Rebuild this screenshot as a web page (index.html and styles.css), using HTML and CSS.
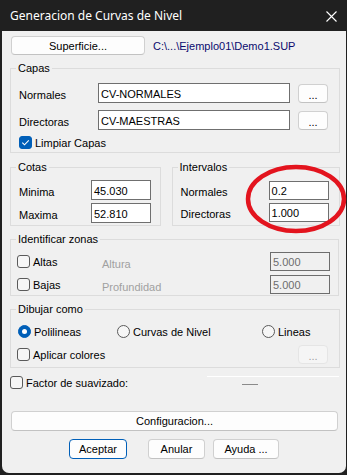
FILE: index.html
```html
<!DOCTYPE html>
<html lang="es">
<head>
<meta charset="utf-8">
<title>Generacion de Curvas de Nivel</title>
<link rel="stylesheet" href="styles.css">
</head>
<body>
<div class="window">
  <div class="titlebar">
    <span class="title">Generacion de Curvas de Nivel</span>
    <svg class="close" width="11" height="11" viewBox="0 0 11 11"><path d="M0.5 0.5 L10.5 10.5 M10.5 0.5 L0.5 10.5" stroke="#ffffff" stroke-width="1.1" fill="none"/></svg>
  </div>
  <div class="client">
    <div class="row-top">
      <button class="btn btn-sup">Superficie...</button>
      <span class="path">C:\...\Ejemplo01\Demo1.SUP</span>
    </div>

    <fieldset class="group capas">
      <legend>Capas</legend>
      <div class="field-row">
        <span class="lbl lbl-capas">Normales</span>
        <div class="input input-wide">CV-NORMALES</div>
        <button class="btn dots">...</button>
      </div>
      <div class="field-row row-gap">
        <span class="lbl lbl-capas">Directoras</span>
        <div class="input input-wide">CV-MAESTRAS</div>
        <button class="btn dots">...</button>
      </div>
      <div class="check-row limpiar">
        <span class="cb checked"><svg width="11" height="11" viewBox="0 0 11 11"><path d="M2.3 5.6 L4.5 7.8 L8.8 3.3" stroke="#ffffff" stroke-width="1.1" fill="none"/></svg></span>
        <span class="cb-text">Limpiar Capas</span>
      </div>
    </fieldset>

    <div class="pair">
      <fieldset class="group cotas">
        <legend>Cotas</legend>
        <div class="field-row">
          <span class="lbl lbl-cotas">Minima</span>
          <div class="input input-num">45.030</div>
        </div>
        <div class="field-row small-gap">
          <span class="lbl lbl-cotas">Maxima</span>
          <div class="input input-num">52.810</div>
        </div>
      </fieldset>
      <fieldset class="group intervalos">
        <legend>Intervalos</legend>
        <div class="field-row h19">
          <span class="lbl lbl-int">Normales</span>
          <div class="input input-num">0.2</div>
        </div>
        <div class="field-row h19 small-gap">
          <span class="lbl lbl-int">Directoras</span>
          <div class="input input-num">1.000</div>
        </div>
      </fieldset>
    </div>

    <fieldset class="group zonas">
      <legend>Identificar zonas</legend>
      <div class="field-row h19">
        <span class="check-item zona-check"><span class="cb"></span><span class="cb-text">Altas</span></span>
        <span class="lbl disabled-text grow">Altura</span>
        <div class="input input-num disabled">5.000</div>
      </div>
      <div class="field-row h19 zona-gap">
        <span class="check-item zona-check"><span class="cb"></span><span class="cb-text">Bajas</span></span>
        <span class="lbl disabled-text grow">Profundidad</span>
        <div class="input input-num disabled">5.000</div>
      </div>
    </fieldset>

    <fieldset class="group dibujar">
      <legend>Dibujar como</legend>
      <div class="radio-row">
        <span class="check-item radio-1"><span class="rb checked"></span><span class="cb-text">Polilineas</span></span>
        <span class="check-item radio-2"><span class="rb"></span><span class="cb-text">Curvas de Nivel</span></span>
        <span class="check-item radio-3"><span class="rb"></span><span class="cb-text">Lineas</span></span>
      </div>
      <div class="field-row h19 aplicar-row">
        <span class="check-item zona-check grow"><span class="cb"></span><span class="cb-text">Aplicar colores</span></span>
        <button class="btn dots dots-disabled">...</button>
      </div>
    </fieldset>

    <div class="factor-row">
      <span class="check-item"><span class="cb"></span><span class="cb-text">Factor de suavizado:</span></span>
      <div class="slider"><div class="thumb"></div></div>
    </div>

    <button class="btn btn-config">Configuracion...</button>

    <div class="buttons-row">
      <button class="btn btn-default btn-aceptar">Aceptar</button>
      <button class="btn btn-anular">Anular</button>
      <button class="btn btn-ayuda">Ayuda ...</button>
    </div>
  </div>

  <svg class="mark" width="347" height="475" viewBox="0 0 347 475">
    <ellipse cx="296" cy="199" rx="48" ry="32" fill="none" stroke="#e3141e" stroke-width="4.5"/>
  </svg>
</div>
</body>
</html>
```

FILE: styles.css
```css
* {
  box-sizing: border-box;
}

html,
body {
  margin: 0;
  padding: 0;
}

body {
  width: 347px;
  height: 475px;
  overflow: hidden;
  background: #202020;
  font-family: "Liberation Sans", Arial, sans-serif;
  font-size: 11px;
  color: #000000;
}

.window {
  position: relative;
  width: 347px;
  height: 475px;
  background: #202020;
}

.titlebar {
  height: 31px;
  display: flex;
  align-items: center;
  justify-content: space-between;
  padding: 0 10px 0 10px;
  color: #ffffff;
  font-family: "Noto Sans", "Open Sans", sans-serif;
  font-size: 12px;
}

.title {
  margin-top: -1px;
}

.close {
  display: block;
  margin-top: 1px;
}

.client {
  background: #f0f0f0;
  margin: 0 1px 0 2px;
  height: 442px;
  border-radius: 0 0 7px 7px;
  padding: 5px 6px 0 8px;
  display: flex;
  flex-direction: column;
}

.btn {
  font-family: inherit;
  font-size: 11px;
  color: #000000;
  background: #fdfdfd;
  border: 1px solid #d0d0d0;
  border-bottom-color: #c2c2c2;
  border-radius: 4px;
  padding: 0;
  margin: 0;
  display: flex;
  align-items: center;
  justify-content: center;
}

.row-top {
  display: flex;
  align-items: center;
  height: 19px;
}

.btn-sup {
  margin-left: 1px;
  width: 134px;
  height: 19px;
}

.path {
  margin-left: 8px;
  color: #0a0a6e;
}

.group {
  border: 1px solid #dcdcdc;
  margin: 0;
  padding: 0 8px 0 8px;
  min-width: 0;
}

.group legend {
  padding: 0 2px;
  margin-left: -3px;
  line-height: 13px;
  height: 13px;
}

.capas {
  margin-top: 7px;
  width: 330px;
  padding-top: 8px;
  padding-bottom: 3px;
}

.field-row {
  display: flex;
  align-items: center;
  height: 20px;
}

.field-row.h19 {
  height: 19px;
}

.row-gap {
  margin-top: 7px;
}

.small-gap {
  margin-top: 3px;
}

.lbl {
  padding-top: 3px;
  white-space: nowrap;
}

.lbl-capas {
  width: 79px;
}

.lbl-cotas {
  width: 72px;
}

.lbl-int {
  width: 88px;
}

.grow {
  flex: 1;
}

.input {
  height: 100%;
  background: #ffffff;
  border: 1px solid #6f6f6f;
  padding: 1px 0 0 2px;
  display: flex;
  align-items: center;
  white-space: nowrap;
}

.input-wide {
  width: 192px;
}

.input-num {
  width: 60px;
}

.input.disabled {
  background: #f0f0f0;
  color: #6d6d6d;
  border-color: #6d6d6d;
}

.dots {
  width: 30px;
  height: 19px;
  margin-left: 8px;
  padding-top: 3px;
}

.dots-disabled {
  background: #f5f5f5;
  border-color: #e5e5e5;
  color: #a0a0a0;
}

.check-row {
  display: flex;
  align-items: center;
  height: 13px;
}

.limpiar {
  margin-top: 6px;
}

.check-item {
  display: flex;
  align-items: center;
  white-space: nowrap;
}

.cb {
  flex: none;
  width: 13px;
  height: 13px;
  border: 1px solid #5a5a5a;
  border-radius: 3px;
  background: #f6f6f6;
  display: flex;
  align-items: center;
  justify-content: center;
}

.cb.checked {
  background: #005fb8;
  border-color: #005fb8;
}

.cb svg {
  display: block;
}

.cb-text {
  margin-left: 3px;
  padding-top: 1px;
}

.pair {
  display: flex;
  gap: 11px;
  margin-top: 8px;
}

.cotas {
  width: 151px;
  padding-top: 6px;
  padding-bottom: 2px;
}

.intervalos {
  width: 169px;
  padding-top: 7px;
  padding-bottom: 2px;
}

.disabled-text {
  color: #a0a0a0;
  padding-top: 4px;
}

.zonas {
  margin-top: 7px;
  width: 329px;
  padding-top: 6px;
  padding-bottom: 1px;
}

.zona-check {
  margin-left: -2px;
  width: 85px;
}

.zona-gap {
  margin-top: 4px;
}

.dibujar {
  margin-top: 7px;
  width: 330px;
  padding-top: 9px;
  padding-bottom: 3px;
}

.radio-row {
  display: flex;
  align-items: center;
  height: 13px;
}

.rb {
  flex: none;
  width: 13px;
  height: 13px;
  border: 1px solid #5a5a5a;
  border-radius: 50%;
  background: #f6f6f6;
  display: flex;
  align-items: center;
  justify-content: center;
}

.rb.checked {
  background: #005fb8;
  border-color: #005fb8;
}

.rb.checked::after {
  content: "";
  width: 5px;
  height: 5px;
  border-radius: 50%;
  background: #ffffff;
}

.radio-1 {
  margin-left: -1px;
  width: 99px;
}

.radio-2 {
  width: 145px;
}

.aplicar-row {
  margin-top: 7px;
}

.aplicar-row .dots {
  margin-right: 3px;
}

.factor-row {
  display: flex;
  align-items: flex-start;
  margin-top: 8px;
  height: 14px;
}

.slider {
  margin-left: auto;
  margin-right: 1px;
  width: 132px;
  height: 14px;
  border-top: 1px solid #ffffff;
  padding-left: 35px;
  padding-top: 7px;
}

.thumb {
  width: 16px;
  height: 1px;
  background: #8a8a8a;
}

.btn-config {
  margin-top: 21px;
  margin-left: 1px;
  width: 327px;
  height: 20px;
}

.buttons-row {
  display: flex;
  margin-top: 8px;
  height: 20px;
}

.buttons-row .btn {
  height: 20px;
}

.btn-default {
  border: 1px solid #005fb8;
}

.btn-aceptar {
  margin-left: 59px;
  width: 58px;
}

.btn-anular {
  margin-left: 21px;
  width: 57px;
}

.btn-ayuda {
  margin-left: 8px;
  width: 66px;
}

.mark {
  position: absolute;
  left: 0;
  top: 0;
  pointer-events: none;
}
```
